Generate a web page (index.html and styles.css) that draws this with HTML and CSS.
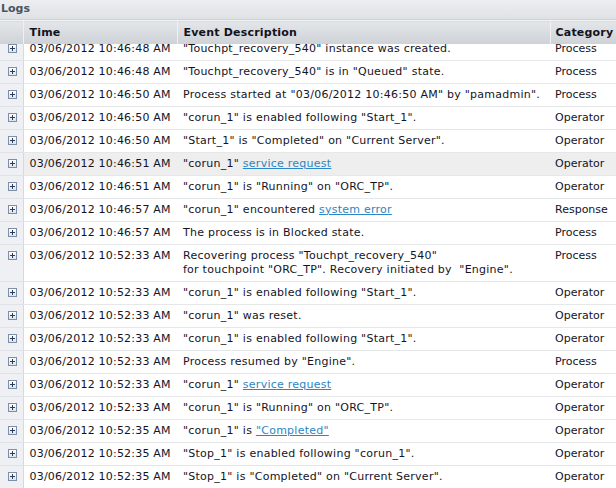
FILE: index.html
```html
<!DOCTYPE html>
<html lang="en">

<head>
    <meta charset="UTF-8">
    <title>Logs</title>
    <link rel="stylesheet" href="styles.css">
</head>

<body>
    <div class="panel">
        <div class="panel-title">Logs</div>

        <!-- column headers -->
        <table class="grid grid-head">
            <colgroup>
                <col class="c-exp"><col class="c-time"><col class="c-desc"><col class="c-cat">
            </colgroup>
            <tr>
                <th class="exp"></th>
                <th>Time</th>
                <th>Event Description</th>
                <th>Category</th>
            </tr>
        </table>

        <!-- log rows (scrolled a little) -->
        <div class="grid-body">
            <table class="grid rows">
                <colgroup>
                    <col class="c-exp"><col class="c-time"><col class="c-desc"><col class="c-cat">
                </colgroup>
                <tr>
                    <td class="exp"><span class="plus"></span></td>
                    <td class="time">03/06/2012 10:46:48 AM</td>
                    <td class="desc">"Touchpt_recovery_540" instance was created.</td>
                    <td>Process</td>
                </tr>
                <tr>
                    <td class="exp"><span class="plus"></span></td>
                    <td class="time">03/06/2012 10:46:48 AM</td>
                    <td class="desc">"Touchpt_recovery_540" is in "Queued" state.</td>
                    <td>Process</td>
                </tr>
                <tr>
                    <td class="exp"><span class="plus"></span></td>
                    <td class="time">03/06/2012 10:46:50 AM</td>
                    <td class="desc">Process started at "03/06/2012 10:46:50 AM" by "pamadmin".</td>
                    <td>Process</td>
                </tr>
                <tr>
                    <td class="exp"><span class="plus"></span></td>
                    <td class="time">03/06/2012 10:46:50 AM</td>
                    <td class="desc">"corun_1" is enabled following "Start_1".</td>
                    <td>Operator</td>
                </tr>
                <tr>
                    <td class="exp"><span class="plus"></span></td>
                    <td class="time">03/06/2012 10:46:50 AM</td>
                    <td class="desc">"Start_1" is "Completed" on "Current Server".</td>
                    <td>Operator</td>
                </tr>
                <tr class="hover">
                    <td class="exp"><span class="plus"></span></td>
                    <td class="time">03/06/2012 10:46:51 AM</td>
                    <td class="desc">"corun_1" <a href="#">service request</a></td>
                    <td>Operator</td>
                </tr>
                <tr>
                    <td class="exp"><span class="plus"></span></td>
                    <td class="time">03/06/2012 10:46:51 AM</td>
                    <td class="desc">"corun_1" is "Running" on "ORC_TP".</td>
                    <td>Operator</td>
                </tr>
                <tr>
                    <td class="exp"><span class="plus"></span></td>
                    <td class="time">03/06/2012 10:46:57 AM</td>
                    <td class="desc">"corun_1" encountered <a href="#">system error</a></td>
                    <td>Response</td>
                </tr>
                <tr>
                    <td class="exp"><span class="plus"></span></td>
                    <td class="time">03/06/2012 10:46:57 AM</td>
                    <td class="desc">The process is in Blocked state.</td>
                    <td>Process</td>
                </tr>
                <tr>
                    <td class="exp"><span class="plus"></span></td>
                    <td class="time">03/06/2012 10:52:33 AM</td>
                    <td class="desc">Recovering process "Touchpt_recovery_540"<br>for touchpoint "ORC_TP". Recovery initiated by &nbsp;"Engine".</td>
                    <td>Process</td>
                </tr>
                <tr>
                    <td class="exp"><span class="plus"></span></td>
                    <td class="time">03/06/2012 10:52:33 AM</td>
                    <td class="desc">"corun_1" is enabled following "Start_1".</td>
                    <td>Operator</td>
                </tr>
                <tr>
                    <td class="exp"><span class="plus"></span></td>
                    <td class="time">03/06/2012 10:52:33 AM</td>
                    <td class="desc">"corun_1" was reset.</td>
                    <td>Operator</td>
                </tr>
                <tr>
                    <td class="exp"><span class="plus"></span></td>
                    <td class="time">03/06/2012 10:52:33 AM</td>
                    <td class="desc">"corun_1" is enabled following "Start_1".</td>
                    <td>Operator</td>
                </tr>
                <tr>
                    <td class="exp"><span class="plus"></span></td>
                    <td class="time">03/06/2012 10:52:33 AM</td>
                    <td class="desc">Process resumed by "Engine".</td>
                    <td>Process</td>
                </tr>
                <tr>
                    <td class="exp"><span class="plus"></span></td>
                    <td class="time">03/06/2012 10:52:33 AM</td>
                    <td class="desc">"corun_1" <a href="#">service request</a></td>
                    <td>Operator</td>
                </tr>
                <tr>
                    <td class="exp"><span class="plus"></span></td>
                    <td class="time">03/06/2012 10:52:33 AM</td>
                    <td class="desc">"corun_1" is "Running" on "ORC_TP".</td>
                    <td>Operator</td>
                </tr>
                <tr>
                    <td class="exp"><span class="plus"></span></td>
                    <td class="time">03/06/2012 10:52:35 AM</td>
                    <td class="desc">"corun_1" is <a href="#">"Completed"</a></td>
                    <td>Operator</td>
                </tr>
                <tr>
                    <td class="exp"><span class="plus"></span></td>
                    <td class="time">03/06/2012 10:52:35 AM</td>
                    <td class="desc">"Stop_1" is enabled following "corun_1".</td>
                    <td>Operator</td>
                </tr>
                <tr>
                    <td class="exp"><span class="plus"></span></td>
                    <td class="time">03/06/2012 10:52:35 AM</td>
                    <td class="desc">"Stop_1" is "Completed" on "Current Server".</td>
                    <td>Operator</td>
                </tr>
            </table>
        </div>
    </div>
</body>

</html>
```

FILE: styles.css
```css
/* page */
body {
    margin: 0;
    font-family: "DejaVu Sans", Verdana, sans-serif;
    font-size: 11px;
    color: #14141f;
    background: #fff;
}

.panel {
    width: 616px;
    height: 488px;
    overflow: hidden;
}

/* title bar */
.panel-title {
    height: 20px;
    line-height: 17px;
    padding-left: 1px;
    font-weight: bold;
    color: #4a5361;
    background: linear-gradient(#eceef0, #dfe2e5);
    border-bottom: 1px solid #cdd1d5;
    box-sizing: border-box;
}

/* shared grid table */
.grid {
    table-layout: fixed;
    border-collapse: collapse;
    width: 630px;
}

.c-exp { width: 23px; }
.c-time { width: 154px; }
.c-desc { width: 373px; }
.c-cat { width: 80px; }

/* header row */
.grid-head th {
    height: 23px;
    padding: 0 6px;
    text-align: left;
    font-weight: bold;
    letter-spacing: 0.2px;
    color: #121220;
    background: linear-gradient(#e3e6e9, #ced2d7);
    border-left: 1px solid #eef0f2;
    border-top: 1px solid #f2f3f5;
    box-sizing: border-box;
    vertical-align: middle;
}

.grid-head th.exp {
    border-left: none;
    padding: 0;
}

.grid-head th:last-child {
    padding-left: 5px;
}

/* body rows */
.grid-body {
    height: 444px;
    overflow: hidden;
}

.rows {
    margin-top: -6px;
}

.rows td {
    padding: 4px 6px;
    line-height: 14px;
    vertical-align: top;
    white-space: nowrap;
    border-bottom: 1px solid #e6e7e9;
}

.rows td:last-child {
    padding-left: 5px;
}

.rows td.time {
    letter-spacing: 0.2px;
}

.rows td.desc {
    letter-spacing: 0.25px;
}

.rows td.exp {
    padding: 6px 0 0 8px;
    background: #eef0f3;
    border-right: 1px solid #d6d9dd;
    border-bottom-color: #dfe2e6;
}

.rows tr.hover td {
    background: #eeeeee;
}

.rows tr.hover td.exp {
    background: #eef0f3;
}

.rows a {
    color: #2a86c6;
    text-decoration: underline;
}

/* expand box */
.plus {
    display: block;
    position: relative;
    width: 7px;
    height: 7px;
    border: 1px solid #7d8ea6;
    background: linear-gradient(#ffffff, #dde3ec);
}

.plus::before,
.plus::after {
    content: "";
    position: absolute;
    background: #2c3d5c;
}

.plus::before {
    left: 1px;
    top: 3px;
    width: 5px;
    height: 1px;
}

.plus::after {
    left: 3px;
    top: 1px;
    width: 1px;
    height: 5px;
}
```
